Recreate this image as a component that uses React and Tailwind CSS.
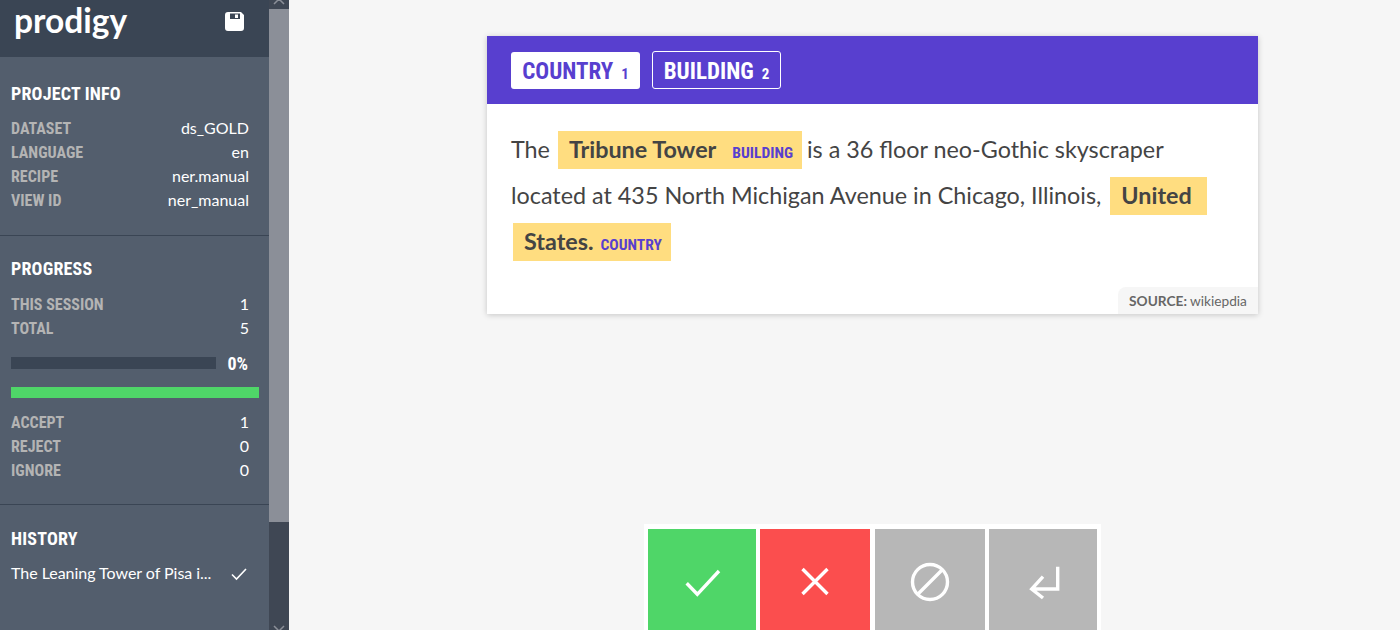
function Row({ label, value }) {
  return (
    <div className="flex h-6 items-center justify-between pr-5">
      <span className="font-['Roboto',sans-serif] [font-stretch:75%] text-[16px] font-bold uppercase text-[#b4b4b4]">{label}</span>
      <span className="pb-[2px] font-['Lato',sans-serif] text-[16px] text-white">{value}</span>
    </div>
  )
}

function Title({ children }) {
  return (
    <h2 className="font-['Roboto',sans-serif] [font-stretch:75%] text-[18px] leading-6 font-bold tracking-[0.2px] uppercase text-white">
      {children}
    </h2>
  )
}

function Sidebar() {
  return (
    <div className="flex h-[630px] w-[269px] shrink-0 flex-col bg-[#535e6d]">
      <div className="flex h-[57px] shrink-0 items-start justify-between bg-[#3a4554] pr-[25px] pl-[14px]">
        <span className="font-['Lato',sans-serif] text-[33.5px] leading-[40px] font-bold text-white">prodigy</span>
        <svg viewBox="0 0 19 19" className="mt-[12px] h-[19px] w-[19px]" fill="white">
          <path fillRule="evenodd" d="M3 0h13l3 3v13a3 3 0 0 1-3 3H3a3 3 0 0 1-3-3V3a3 3 0 0 1 3-3zm2 1.5v5.5h10V1.5zM10 2.5h3v3.5h-3z" />
        </svg>
      </div>
      <section className="h-[179px] shrink-0 border-b border-[#3a4554] pt-[25px] pl-[11px]">
        <Title>Project Info</Title>
        <div className="mt-[11px]">
          <Row label="Dataset" value="ds_GOLD" />
          <Row label="Language" value="en" />
          <Row label="Recipe" value="ner.manual" />
          <Row label="View ID" value="ner_manual" />
        </div>
      </section>
      <section className="h-[269px] shrink-0 border-b border-[#3a4554] pt-[21px] pl-[11px]">
        <Title>Progress</Title>
        <div className="mt-[12px]">
          <Row label="This Session" value="1" />
          <Row label="Total" value="5" />
        </div>
        <div className="mt-[13px] flex h-[18px] items-center justify-between pr-[21px]">
          <div className="h-3 w-[205px] bg-[#3a4554]" />
          <span className="font-['Roboto',sans-serif] [font-stretch:75%] text-[18px] font-bold text-white">0%</span>
        </div>
        <div className="mt-[15px] h-[11px] w-[248px] bg-[#4fd668]" />
        <div className="mt-[13px]">
          <Row label="Accept" value="1" />
          <Row label="Reject" value="0" />
          <Row label="Ignore" value="0" />
        </div>
      </section>
      <section className="pt-[22px] pl-[11px]">
        <Title>History</Title>
        <div className="mt-[11px] flex h-6 items-center justify-between pr-[22px]">
          <span className="pb-[2px] font-['Lato',sans-serif] text-[16px] tracking-[-0.03px] text-white">The Leaning Tower of Pisa i...</span>
          <svg viewBox="0 0 16 16" className="h-4 w-4" fill="none" stroke="white" strokeWidth="1.6">
            <path d="M1 8.5l4.5 4.5L15 3" />
          </svg>
        </div>
      </section>
    </div>
  )
}

function Scrollbar() {
  return (
    <div className="flex h-[630px] w-5 shrink-0 flex-col bg-[#3f4754]">
      <div className="flex h-[9px] items-start justify-center overflow-hidden">
        <svg viewBox="0 0 12 8" className="-mt-[3px] h-2 w-3" fill="none" stroke="#8b8f98" strokeWidth="1.5">
          <path d="M1 7l5-5 5 5" />
        </svg>
      </div>
      <div className="h-[513px] bg-[#8b8f98]" />
      <div className="flex-1" />
      <div className="flex h-[9px] items-end justify-center overflow-hidden">
        <svg viewBox="0 0 12 8" className="-mb-[3px] h-2 w-3" fill="none" stroke="#8b8f98" strokeWidth="1.5">
          <path d="M1 1l5 5 5-5" />
        </svg>
      </div>
    </div>
  )
}

function Label({ className, children }) {
  return (
    <span className={`font-['Roboto',sans-serif] [font-stretch:75%] text-[15.5px] leading-none font-bold text-[#583fcf] ${className}`}>
      {children}
    </span>
  )
}

function Card() {
  return (
    <div className="relative h-[278px] w-[771px] shrink-0 overflow-hidden bg-white shadow-[0_1px_6px_rgba(0,0,0,0.2)]">
      <div className="flex h-[68px] items-center gap-3 bg-[#583fcf] px-6 font-['Roboto',sans-serif] [font-stretch:75%]">
        <button className="flex h-[37px] w-[129px] items-center justify-center gap-[8px] rounded-[3px] bg-white pt-1 text-[#583fcf]">
          <span className="text-[23px] font-bold">COUNTRY</span>
          <span className="mt-1 text-[15px] font-bold">1</span>
        </button>
        <button className="flex h-[38px] w-[129px] items-center justify-center gap-[8px] rounded-[3px] border border-white pt-1 text-white">
          <span className="text-[23px] font-bold">BUILDING</span>
          <span className="mt-1 text-[15px] font-bold">2</span>
        </button>
      </div>
      <p className="px-6 pt-[22px] font-['Lato',sans-serif] text-[23.35px] leading-[46px] text-[#444]">
        The{' '}
        <mark className="-mr-[1px] ml-[2px] bg-[#ffdd80] pt-[4px] pr-[9px] pb-[6px] pl-[11px] font-bold text-[#444]">
          Tribune Tower<Label className="ml-[16px]">BUILDING</Label>
        </mark>{' '}
        is a 36 floor neo-Gothic skyscraper located at 435 North Michigan Avenue in Chicago, Illinois,{' '}
        <mark className="ml-[3px] bg-[#ffdd80] pt-[4px] pr-[15px] pb-[6px] pl-[11px] font-bold text-[#444]">United</mark>{' '}
        <mark className="ml-[2px] bg-[#ffdd80] pt-[4px] pr-[9px] pb-[6px] pl-[11px] font-bold text-[#444]">
          States.<Label className="ml-[7px]">COUNTRY</Label>
        </mark>
      </p>
      <div className="absolute right-0 bottom-0 flex h-[27px] w-[140px] items-center justify-center rounded-tl-[8px] bg-[#f6f6f6] pt-[2px] font-['Lato',sans-serif] text-[13.7px] text-[#666]">
        <b className="mr-[3px]">SOURCE:</b> wikiepdia
      </div>
    </div>
  )
}

function ActionButton({ className, children }) {
  return (
    <button className={`flex h-[106px] items-center justify-center ${className}`}>
      <svg viewBox="0 0 48 48" className="h-12 w-12" fill="none" stroke="white" strokeWidth="3.4">
        {children}
      </svg>
    </button>
  )
}

export default function App() {
  return (
    <div className="flex h-[630px] w-[1400px] overflow-hidden bg-[#f6f6f6]">
      <Sidebar />
      <Scrollbar />
      <main className="flex flex-1 flex-col items-center pt-9 pl-14">
        <Card />
        <div className="mt-[210px] flex w-[457px] shrink-0 gap-1 bg-white px-1 pt-[5px]">
          <ActionButton className="w-[108px] bg-[#4fd668]">
            <path d="M8.7 25.3l10.6 11L41 13" />
          </ActionButton>
          <ActionButton className="w-[110px] bg-[#fb4e4e]">
            <path d="M11.5 11l25 25M36.5 11l-25 25" />
          </ActionButton>
          <ActionButton className="ml-[1px] w-[110px] bg-[#b7b7b7]">
            <circle cx="24" cy="24" r="17.5" />
            <path d="M12 36L36 12" />
          </ActionButton>
          <ActionButton className="w-[108px] bg-[#b7b7b7]">
            <path d="M38.7 8.7V31H13M24 18.7L12.7 31 24 40" />
          </ActionButton>
        </div>
      </main>
    </div>
  )
}
